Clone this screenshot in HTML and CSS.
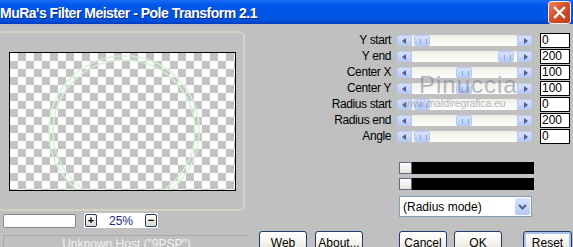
FILE: index.html
```html
<!DOCTYPE html>
<html lang="en">
<head>
    <meta charset="UTF-8">
    <title>MuRa's Filter Meister - Pole Transform 2.1</title>
    <link rel="stylesheet" href="styles.css">
</head>
<body>
    <div class="titlebar">
        <span class="title">MuRa's Filter Meister - Pole Transform 2.1</span>
        <span class="close">
            <svg width="13" height="13" viewBox="0 0 13 13"><path d="M2 2 L11 11 M11 2 L2 11" stroke="#fff" stroke-width="2.4" stroke-linecap="square"/></svg>
        </span>
    </div>

    <div class="client">
        <div class="upper">
            <div class="left-pane">
                <div class="groupbox">
                    <div class="preview">
                        <div class="ring"></div>
                    </div>
                </div>
                <div class="zoom-row">
                    <div class="zoom-input"></div>
                    <div class="zoom-box">
                        <span class="zbtn">+</span>
                        <span class="zval">25%</span>
                        <span class="zbtn">&minus;</span>
                    </div>
                </div>
            </div>

            <div class="right-pane">
                <div class="row">
                    <span class="label">Y start</span>
                    <div class="scroll"><span class="arrow left"></span><div class="track"><span class="thumb" style="margin-left:2px"></span></div><span class="arrow right"></span></div>
                    <div class="value">0</div>
                </div>
                <div class="row">
                    <span class="label">Y end</span>
                    <div class="scroll"><span class="arrow left"></span><div class="track"><span class="thumb" style="margin-left:86px"></span></div><span class="arrow right"></span></div>
                    <div class="value">200</div>
                </div>
                <div class="row">
                    <span class="label">Center X</span>
                    <div class="scroll"><span class="arrow left"></span><div class="track"><span class="thumb" style="margin-left:44px"></span></div><span class="arrow right"></span></div>
                    <div class="value">100</div>
                </div>
                <div class="row">
                    <span class="label">Center Y</span>
                    <div class="scroll"><span class="arrow left"></span><div class="track"><span class="thumb" style="margin-left:44px"></span></div><span class="arrow right"></span></div>
                    <div class="value">100</div>
                </div>
                <div class="row">
                    <span class="label">Radius start</span>
                    <div class="scroll"><span class="arrow left"></span><div class="track"><span class="thumb" style="margin-left:2px"></span></div><span class="arrow right"></span></div>
                    <div class="value">0</div>
                </div>
                <div class="row">
                    <span class="label">Radius end</span>
                    <div class="scroll"><span class="arrow left"></span><div class="track"><span class="thumb" style="margin-left:44px"></span></div><span class="arrow right"></span></div>
                    <div class="value">200</div>
                </div>
                <div class="row">
                    <span class="label">Angle</span>
                    <div class="scroll"><span class="arrow left"></span><div class="track"><span class="thumb" style="margin-left:2px"></span></div><span class="arrow right"></span></div>
                    <div class="value">0</div>
                </div>

                <div class="colors">
                    <div class="color-bar"><span class="swatch"></span></div>
                    <div class="color-bar"><span class="swatch"></span></div>
                </div>

                <div class="combo">
                    <span class="combo-text">(Radius mode)</span>
                    <span class="combo-btn">
                        <svg width="9" height="6" viewBox="0 0 9 6"><path d="M1 1 L4.5 4.5 L8 1" fill="none" stroke="#4d6185" stroke-width="2"/></svg>
                    </span>
                </div>

                <div class="watermark">
                    <span class="wm-name">Pinuccia</span>
                    <span class="wm-url">www.maldiregrafica.eu</span>
                </div>
            </div>
        </div>

        <div class="bottom">
            <div class="status">Unknown Host ("9PSP")</div>
            <button class="web">Web</button>
            <button class="about">About...</button>
            <button class="cancel">Cancel</button>
            <button class="ok">OK</button>
            <button class="reset">Reset</button>
        </div>
    </div>
</body>
</html>
```

FILE: styles.css
```css
body {
    margin: 0;
    width: 573px;
    height: 247px;
    overflow: hidden;
    background-color: #c0c0c0;
    font-family: "Liberation Sans", Arial, sans-serif;
    font-size: 12px;
    color: #000;
}

.titlebar {
    height: 24px;
    display: flex;
    align-items: center;
    justify-content: space-between;
    background: linear-gradient(#1a6cf4 0%, #0058ea 20%, #0055e3 75%, #0048d2 92%, #003cb8 100%);
}

.title {
    color: #fff;
    font-weight: bold;
    font-size: 14px;
    letter-spacing: -0.5px;
    text-shadow: 1px 1px 0 #0a2a8a;
    padding-top: 1px;
}

.close {
    width: 21px;
    height: 21px;
    margin-right: 2px;
    border: 1px solid #f3f3f3;
    border-radius: 3px;
    background: linear-gradient(135deg, #e98a70 0%, #d9542c 40%, #c43a12 100%);
    display: flex;
    align-items: center;
    justify-content: center;
}

.client {
    display: flex;
    flex-direction: column;
}

.upper {
    display: flex;
    height: 207px;
}

/* left side: preview */
.left-pane {
    width: 250px;
}

.groupbox {
    margin-top: 7px;
    margin-left: -3px;
    border: 2px solid #d4d2c2;
    border-radius: 5px;
    padding: 19px 0 0 10px;
    width: 234px;
    height: 157px;
}

.preview {
    position: relative;
    width: 225px;
    height: 137px;
    border: 1px solid #000;
    overflow: hidden;
    background-color: #fff;
    background-image: conic-gradient(#c3c3c3 25%, #fff 0 50%, #c3c3c3 0 75%, #fff 0);
    background-size: 16px 16px;
}

.ring {
    position: absolute;
    left: 38px;
    top: 2px;
    width: 140px;
    height: 140px;
    border-radius: 50%;
    border: 6px double rgba(214, 240, 214, 0.8);
}

.zoom-row {
    display: flex;
    align-items: center;
    margin-top: 2px;
    height: 15px;
}

.zoom-input {
    width: 71px;
    height: 12px;
    margin-left: 3px;
    background: #fff;
    border: 1px solid #8a8a8a;
    border-radius: 2px;
}

.zoom-box {
    display: flex;
    align-items: center;
    justify-content: space-between;
    width: 72px;
    height: 15px;
    margin-left: 8px;
    padding: 0 1px;
    background: #fff;
}

.zbtn {
    width: 10px;
    height: 11px;
    border: 1px solid #1f3b67;
    border-radius: 2px;
    background: linear-gradient(#ffffff, #dcdad0);
    font-size: 11px;
    font-weight: bold;
    line-height: 10px;
    text-align: center;
}

.zval {
    color: #1a2a8c;
    font-size: 12px;
}

/* right side: controls */
.right-pane {
    position: relative;
    flex: 1;
    padding: 8px 3px 0 0;
    display: flex;
    flex-direction: column;
}

.row {
    display: flex;
    align-items: center;
    height: 16px;
}

.label {
    flex: 1;
    text-align: right;
    margin-right: 6px;
    letter-spacing: -0.4px;
}

.scroll {
    display: flex;
    width: 135px;
    height: 11px;
}

.arrow {
    width: 15px;
    height: 11px;
    box-sizing: border-box;
    border: 1px solid #b9cbf3;
    border-radius: 2px;
    background: linear-gradient(#d7e2fc, #b6c9f6);
    position: relative;
}

.arrow::after {
    content: "";
    position: absolute;
    top: 2px;
    border-top: 3px solid transparent;
    border-bottom: 3px solid transparent;
}

.arrow.left::after {
    left: 4px;
    border-right: 4px solid #4d6185;
}

.arrow.right::after {
    left: 6px;
    border-left: 4px solid #4d6185;
}

.track {
    flex: 1;
    display: flex;
    background: linear-gradient(#f1efe6, #fdfdfb);
}

.thumb {
    width: 16px;
    height: 11px;
    box-sizing: border-box;
    border: 1px solid #b9cbf3;
    border-radius: 2px;
    background: repeating-linear-gradient(90deg, transparent 0 4px, #8fa8e0 4px 5px, transparent 5px 6px) 1px 3px / 12px 5px no-repeat,
        linear-gradient(#d7e2fc, #b6c9f6);
}

.value {
    width: 27px;
    height: 13px;
    margin-left: 8px;
    background: #fff;
    border: 1px solid #000;
    padding-left: 1px;
    font-size: 12px;
    line-height: 13px;
}

.colors {
    align-self: flex-end;
    margin: 18px 36px 0 0;
    width: 135px;
}

.color-bar {
    height: 12px;
    background: #000;
    margin-bottom: 4px;
    display: flex;
}

.swatch {
    width: 11px;
    height: 10px;
    background: linear-gradient(#ffffff, #e6e4dc);
    border: 1px solid #5a6c88;
}

.combo {
    align-self: flex-end;
    margin: 2px 38px 0 0;
    width: 131px;
    height: 19px;
    border: 1px solid #7f9db9;
    background: #fff;
    display: flex;
    align-items: center;
    justify-content: space-between;
}

.combo-text {
    padding-left: 3px;
}

.combo-btn {
    width: 15px;
    height: 17px;
    margin-right: 1px;
    border-radius: 2px;
    background: linear-gradient(#d7e2fc, #b6c9f6);
    display: flex;
    align-items: center;
    justify-content: center;
}

.watermark {
    position: absolute;
    left: 152px;
    top: 48px;
    display: flex;
    flex-direction: column;
    color: rgba(120, 130, 150, 0.55);
    pointer-events: none;
}

.wm-name {
    margin-left: 17px;
    font-size: 24px;
    letter-spacing: 1px;
    line-height: 25px;
}

.wm-url {
    font-size: 10.5px;
    line-height: 12px;
    letter-spacing: -0.1px;
}

/* bottom row */
.bottom {
    display: flex;
    align-items: flex-start;
}

.status {
    width: 245px;
    height: 14px;
    margin: 4px 0 0 3px;
    border-top: 1px solid #a8a8a8;
    border-left: 1px solid #a8a8a8;
    color: #f2f2f2;
    text-align: center;
    line-height: 16px;
}

button {
    height: 23px;
    padding: 0;
    font-family: "Liberation Sans", Arial, sans-serif;
    font-size: 12px;
    color: #000;
    border: 1px solid #1c3c6e;
    border-radius: 3px;
    background: linear-gradient(#ffffff 0%, #f4f3ee 50%, #e6e3d9 85%, #d6d0c4 100%);
    width: 48px;
}

.web {
    margin-left: 10px;
}

.about {
    margin-left: 8px;
}

.cancel {
    margin-left: 36px;
}

.ok {
    margin-left: 7px;
}

.reset {
    margin-left: 21px;
    width: 49px;
    box-shadow: inset 0 0 0 2px #a9c2ee;
}
```
